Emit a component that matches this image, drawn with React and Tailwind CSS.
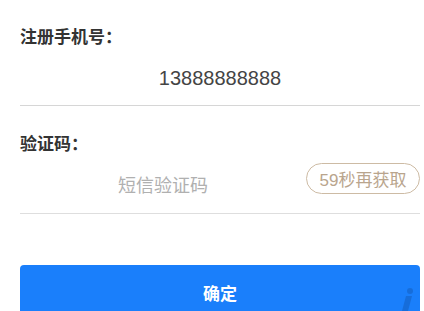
import React, { useState } from "react";

const cjk = { fontFamily: '"Liberation Sans", "Noto Sans CJK SC", sans-serif' };

function App() {
  const [phone] = useState("13888888888");
  const [code, setCode] = useState("");
  const [seconds] = useState(59);

  return (
    <div className="relative w-[424px] h-[311px] overflow-hidden bg-white pl-5 pr-1" style={cjk}>
      <div className="pt-[29px] text-[17px] leading-[17px] font-bold text-[#333]">注册手机号：</div>
      <div className="h-[60px] flex items-center border-b border-[#d6d6d6]">
        <input
          readOnly
          value={phone}
          className="w-full h-[40px] mt-[6px] text-center text-[20px] text-[#444] outline-none bg-transparent"
          style={cjk}
        />
      </div>

      <div className="pt-[30px] text-[17px] leading-[17px] font-bold text-[#333]">验证码：</div>
      <div className="h-[61px] flex items-start border-b border-[#dedede]">
        <input
          value={code}
          onChange={(e) => setCode(e.target.value)}
          placeholder="短信验证码"
          className="flex-1 min-w-0 h-[30px] mt-[18px] text-center text-[18px] leading-[30px] text-[#333] placeholder:text-[#b0b0b0] outline-none bg-transparent"
          style={cjk}
        />
        <button
          className="mt-[10px] w-[114px] h-[31px] rounded-full border border-[#cdbba4] text-[17px] leading-[17px] pt-[3px] text-[#b9a58d] bg-white"
          style={cjk}
        >
          {seconds}秒再获取
        </button>
      </div>

      <button className="mt-[51px] w-full h-[60px] rounded-[4px] bg-[#1a7ffb] text-white text-[17px] font-bold" style={cjk}>
        确定
      </button>

      <svg className="absolute right-[8px] bottom-0 opacity-20" width="16" height="28" viewBox="0 0 16 28">
        <circle cx="10" cy="8" r="3" fill="#0b2a5a" />
        <path d="M6 13 L12 13 L8 28 L2 28 Z" fill="#0b2a5a" />
      </svg>
    </div>
  );
}

export default App;
